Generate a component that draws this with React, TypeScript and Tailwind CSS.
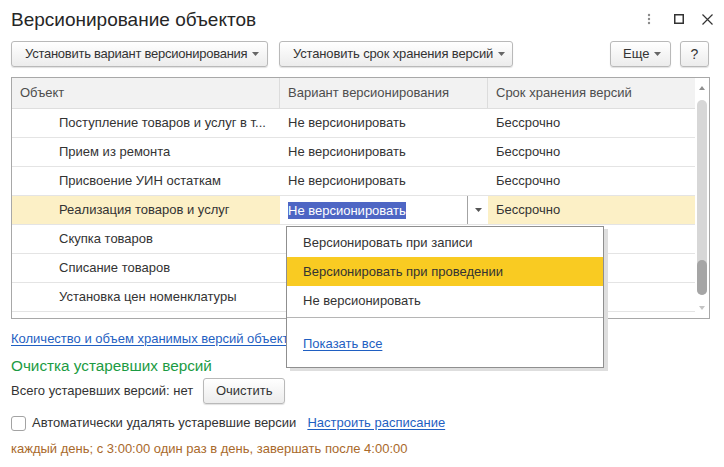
import React from "react";

function Caret({ color = "#666" }: { color?: string }) {
  return (
    <svg width="7" height="4" viewBox="0 0 7 4" className="shrink-0">
      <path d="M0 0 L7 0 L3.5 4 Z" fill={color} />
    </svg>
  );
}

function Btn({
  children,
  className = "",
}: {
  children: React.ReactNode;
  className?: string;
}) {
  return (
    <div
      className={
        "h-[26px] flex items-center rounded-[3px] border border-[#b9b9b9] bg-gradient-to-b from-white to-[#ececec] shadow-[0_1px_1px_rgba(0,0,0,0.12)] text-[#333] whitespace-nowrap " +
        className
      }
    >
      {children}
    </div>
  );
}

const rows = [
  { name: "Поступление товаров и услуг в т...", v: "Не версионировать", s: "Бессрочно" },
  { name: "Прием из ремонта", v: "Не версионировать", s: "Бессрочно" },
  { name: "Присвоение УИН остаткам", v: "Не версионировать", s: "Бессрочно" },
  { name: "Реализация товаров и услуг", v: "Не версионировать", s: "Бессрочно", sel: true },
  { name: "Скупка товаров", v: "", s: "" },
  { name: "Списание товаров", v: "", s: "" },
  { name: "Установка цен номенклатуры", v: "", s: "" },
];

export default function App() {
  return (
    <div className="relative w-[724px] h-[467px] overflow-hidden bg-white text-[13px] leading-[16px] text-[#333] font-['Liberation_Sans',Arial,sans-serif] px-[11px]">
      {/* Title */}
      <div className="h-[38px] flex items-center justify-between">
        <div className="text-[19px] leading-[22px] text-[#262626] pt-[1px]">Версионирование объектов</div>
        <div className="flex items-center">
          <svg width="4" height="12" viewBox="0 0 4 12" className="mr-[23px]">
            <circle cx="2" cy="2" r="1.2" fill="#8a8a8a" />
            <circle cx="2" cy="6" r="1.2" fill="#8a8a8a" />
            <circle cx="2" cy="10" r="1.2" fill="#8a8a8a" />
          </svg>
          <svg width="10" height="10" viewBox="0 0 10 10" className="mr-[18px]">
            <rect x="0.75" y="0.75" width="8.5" height="8.5" fill="none" stroke="#333" strokeWidth="1.5" />
          </svg>
          <svg width="11" height="11" viewBox="0 0 11 11">
            <path d="M0.5 0.5 L10.5 10.5 M10.5 0.5 L0.5 10.5" stroke="#333" strokeWidth="1.2" />
          </svg>
        </div>
      </div>

      {/* Toolbar */}
      <div className="mt-[3px] h-[26px] flex items-center pr-[4px]">
        <Btn className="w-[257px] pl-[13px] pr-[8px]">
          <span className="tracking-[-0.25px]">Установить вариант версионирования</span>
          <div className="flex-1" />
          <Caret />
        </Btn>
        <Btn className="ml-[11px] w-[234px] pl-[13px] pr-[7px]">
          <span className="tracking-[-0.15px]">Установить срок хранения версий</span>
          <div className="flex-1" />
          <Caret />
        </Btn>
        <div className="flex-1" />
        <Btn className="w-[61px] pl-[12px] pr-[9px] justify-between">
          <span>Еще</span>
          <Caret />
        </Btn>
        <Btn className="ml-[9px] w-[29px] justify-center">
          <span className="text-[14px]">?</span>
        </Btn>
      </div>

      {/* Table */}
      <div className="mt-[10px] w-[699px] h-[242px] border border-[#a8a8a8] flex">
        <div className="w-[683px] flex flex-col">
          <div className="h-[31px] flex border-b border-[#dedede] bg-[#f2f2f2] text-[#4d4d4d]">
            <div className="w-[268px] pl-[8px] flex items-center border-r border-[#dcdcdc]">Объект</div>
            <div className="w-[208px] pl-[8px] flex items-center border-r border-[#dcdcdc]">Вариант версионирования</div>
            <div className="w-[207px] pl-[8px] flex items-center">Срок хранения версий</div>
          </div>
          {rows.map((r, i) => (
            <div key={i} className="h-[29px] flex border-b border-[#e4e4e4] shrink-0">
              <div
                className={
                  "w-[268px] pl-[47px] flex items-center whitespace-nowrap overflow-hidden " +
                  (r.sel ? "bg-[#fcf0c6]" : "")
                }
              >
                {r.name}
              </div>
              {r.sel ? (
                <div className="w-[208px] flex bg-white">
                  <div className="w-[187px] pl-[8px] flex items-center">
                    <span className="bg-[#4e66c4] text-white leading-[17px]">{r.v}</span>
                  </div>
                  <div className="w-[1px] bg-[#a3a3a3]" />
                  <div className="flex-1 flex items-center justify-center">
                    <Caret color="#555" />
                  </div>
                </div>
              ) : (
                <div className="w-[208px] pl-[8px] flex items-center">{r.v}</div>
              )}
              <div className={"w-[207px] pl-[8px] flex items-center " + (r.sel ? "bg-[#fcf0c6]" : "")}>{r.s}</div>
            </div>
          ))}
        </div>
        {/* Scrollbar */}
        <div className="w-[14px] pl-[2px] flex flex-col">
          <div className="w-[10px] mt-[8px] h-[4px] flex justify-center">
            <svg width="6" height="4" viewBox="0 0 6 4">
              <path d="M0 4 L6 4 L3 0 Z" fill="#8f8f8f" />
            </svg>
          </div>
          <div className="w-[10px] mt-[10px] h-[195px] rounded-[5px] bg-[#d7d7d7] flex flex-col justify-end">
            <div className="h-[35px] rounded-[5px] bg-[#a5a5a5]" />
          </div>
          <div className="w-[10px] mt-[11px] h-[4px] flex justify-center">
            <svg width="6" height="4" viewBox="0 0 6 4">
              <path d="M0 0 L6 0 L3 4 Z" fill="#c4c4c4" />
            </svg>
          </div>
        </div>
      </div>

      {/* Below table */}
      <div className="mt-[12px] h-[16px] whitespace-nowrap">
        <span className="text-[#1f5fc2] underline underline-offset-2">Количество и объем хранимых версий объектов</span>
      </div>
      <div className="mt-[9px] h-[20px] text-[15.3px] leading-[20px] text-[#1b9b43]">Очистка устаревших версий</div>
      <div className="mt-[2px] h-[26px] flex items-center">
        <span>Всего устаревших версий: нет</span>
        <Btn className="ml-[10px] w-[82px] justify-center">
          <span>Очистить</span>
        </Btn>
      </div>
      <div className="mt-[11px] h-[16px] flex items-center whitespace-nowrap">
        <div className="w-[15px] h-[15px] rounded-[3px] border border-[#a3a3a3] bg-white" />
        <span className="ml-[6px]">Автоматически удалять устаревшие версии</span>
        <span className="ml-[11px] text-[#1f5fc2] underline underline-offset-2">Настроить расписание</span>
      </div>
      <div className="mt-[10px] h-[16px] text-[#a9692b] whitespace-nowrap">
        каждый день; с 3:00:00 один раз в день, завершать после 4:00:00
      </div>

      {/* Dropdown popup */}
      <div className="absolute left-[286px] top-[226px] w-[318px] h-[142px] border border-[#8f8f8f] bg-white shadow-[4px_3px_0_0_#dedede] flex flex-col">
        <div className="pt-[1px]">
          <div className="h-[29px] pl-[16px] flex items-center">Версионировать при записи</div>
          <div className="h-[29px] pl-[16px] flex items-center bg-[#f9cb22]">Версионировать при проведении</div>
          <div className="h-[29px] pl-[16px] flex items-center">Не версионировать</div>
        </div>
        <div className="mt-[2px] border-t border-[#b5b5b5]" />
        <div className="flex-1 pl-[16px] pt-[2px] flex items-center">
          <span className="text-[#1f5fc2] underline underline-offset-2">Показать все</span>
        </div>
      </div>
    </div>
  );
}
